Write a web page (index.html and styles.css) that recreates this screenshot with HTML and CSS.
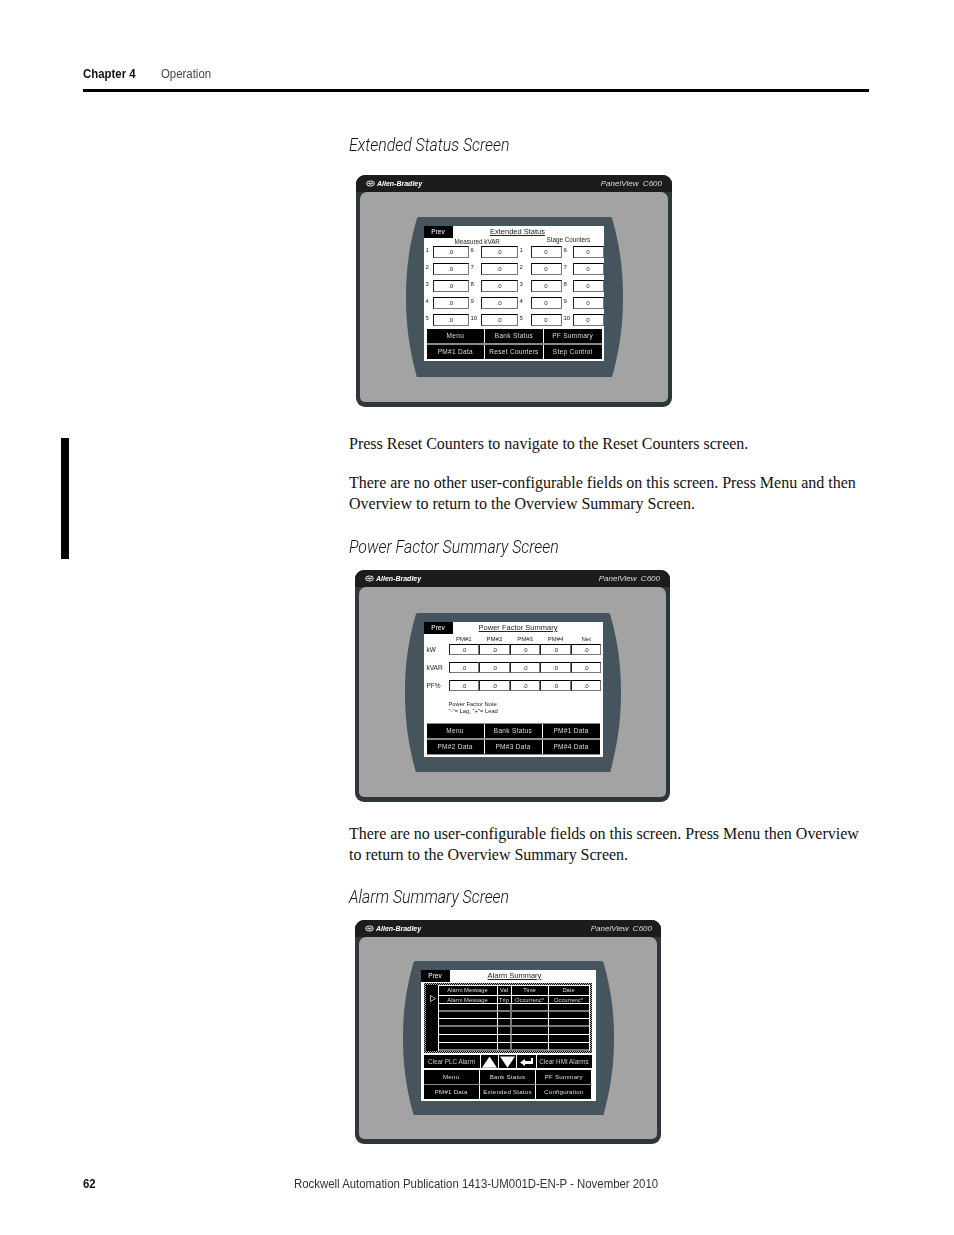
FILE: index.html
```html
<!DOCTYPE html>
<html lang="en">
<head>
<meta charset="utf-8">
<title>Chapter 4 Operation</title>
<link rel="stylesheet" href="styles.css">
</head>
<body>
<div class="page">
	<div class="top">
		<b class="narrow">Chapter 4</b><span class="narrow">Operation</span>
	</div>
	<div class="columns">
		<div class="side"><div class="marker"></div></div>
		<div class="main">
			<h2 class="first">Extended Status Screen</h2>

			<!-- extended status -->
			<div class="device d1">
				<div class="devHead">
					<span class="brand"><svg viewBox="0 0 12 8" width="9" height="7"><ellipse cx="6" cy="4" rx="5.2" ry="3.4" fill="none" stroke="#fff" stroke-width="1.2"/><path d="M2 4h8M4 2l2 4 2-4" fill="none" stroke="#fff" stroke-width=".8"/></svg>Allen-Bradley</span>
					<span class="model">PanelView&nbsp; C600</span>
				</div>
				<div class="devBody">
					<div class="bezel">
						<svg class="bezelShape" viewBox="0 0 100 100" preserveAspectRatio="none"><path d="M5 1Q5.200 0 6 0L94 0Q94.800 0 95 1C99 20 100 35 100 50C100 65 99 80 95 100L5 100C1 80 0 65 0 50C0 35 1 20 5 1Z"/></svg>
						<div class="screen">
							<div class="titleRow">
								<div class="prev">Prev</div>
								<div class="title"><u>Extended Status</u></div>
							</div>
							<div class="subRow"><span class="subA">Measured kVAR</span><span class="subB">Stage Counters</span></div>
							<div class="fields">
								<span>1</span><i>.0</i><span>6</span><i>.0</i><span>1</span><i>0</i><span>6</span><i>0</i>
								<span>2</span><i>.0</i><span>7</span><i>.0</i><span>2</span><i>0</i><span>7</span><i>0</i>
								<span>3</span><i>.0</i><span>8</span><i>.0</i><span>3</span><i>0</i><span>8</span><i>0</i>
								<span>4</span><i>.0</i><span>9</span><i>.0</i><span>4</span><i>0</i><span>9</span><i>0</i>
								<span>5</span><i>.0</i><span>10</span><i>.0</i><span>5</span><i>0</i><span>10</span><i>0</i>
							</div>
							<div class="btns">
								<div>Menu</div><div>Bank Status</div><div>PF Summary</div>
								<div>PM#1 Data</div><div>Reset Counters</div><div>Step Control</div>
							</div>
						</div>
					</div>
				</div>
			</div>

			<p class="p1">Press Reset Counters to navigate to the Reset Counters screen.</p>
			<p class="p2">There are no other user-configurable fields on this screen. Press Menu and then Overview to return to the Overview Summary Screen.</p>

			<h2 class="second">Power Factor Summary Screen</h2>

			<!-- power factor -->
			<div class="device d2">
				<div class="devHead">
					<span class="brand"><svg viewBox="0 0 12 8" width="9" height="7"><ellipse cx="6" cy="4" rx="5.2" ry="3.4" fill="none" stroke="#fff" stroke-width="1.2"/><path d="M2 4h8M4 2l2 4 2-4" fill="none" stroke="#fff" stroke-width=".8"/></svg>Allen-Bradley</span>
					<span class="model">PanelView&nbsp; C600</span>
				</div>
				<div class="devBody">
					<div class="bezel">
						<svg class="bezelShape" viewBox="0 0 100 100" preserveAspectRatio="none"><path d="M5 1Q5.200 0 6 0L94 0Q94.800 0 95 1C99 20 100 35 100 50C100 65 99 80 95 100L5 100C1 80 0 65 0 50C0 35 1 20 5 1Z"/></svg>
						<div class="screen">
							<div class="titleRow">
								<div class="prev">Prev</div>
								<div class="title"><u>Power Factor Summary</u></div>
							</div>
							<div class="pfTable">
								<span></span><b>PM#1</b><b>PM#2</b><b>PM#3</b><b>PM#4</b><b>Net</b>
								<span>kW</span><i>.0</i><i>.0</i><i>.0</i><i>.0</i><i>.0</i>
								<span>kVAR</span><i>.0</i><i>.0</i><i>.0</i><i>.0</i><i>.0</i>
								<span>PF%</span><i>.0</i><i>.0</i><i>.0</i><i>.0</i><i>.0</i>
							</div>
							<div class="pfNote"><b>Power Factor Note:</b><br>"-"= Lag, "+"= Lead</div>
							<div class="btns">
								<div>Menu</div><div>Bank Status</div><div>PM#1 Data</div>
								<div>PM#2 Data</div><div>PM#3 Data</div><div>PM#4 Data</div>
							</div>
						</div>
					</div>
				</div>
			</div>

			<p class="p3">There are no user-configurable fields on this screen. Press Menu then Overview to return to the Overview Summary Screen.</p>

			<h2 class="third">Alarm Summary Screen</h2>

			<!-- alarm summary -->
			<div class="device d3">
				<div class="devHead">
					<span class="brand"><svg viewBox="0 0 12 8" width="9" height="7"><ellipse cx="6" cy="4" rx="5.2" ry="3.4" fill="none" stroke="#fff" stroke-width="1.2"/><path d="M2 4h8M4 2l2 4 2-4" fill="none" stroke="#fff" stroke-width=".8"/></svg>Allen-Bradley</span>
					<span class="model">PanelView&nbsp; C600</span>
				</div>
				<div class="devBody">
					<div class="bezel">
						<svg class="bezelShape" viewBox="0 0 100 100" preserveAspectRatio="none"><path d="M5 1Q5.200 0 6 0L94 0Q94.800 0 95 1C99 20 100 35 100 50C100 65 99 80 95 100L5 100C1 80 0 65 0 50C0 35 1 20 5 1Z"/></svg>
						<div class="screen">
							<div class="titleRow">
								<div class="prev">Prev</div>
								<div class="title"><u>Alarm Summary</u></div>
							</div>
							<div class="alarmBox">
								<div class="cursor"><svg viewBox="0 0 6 7" width="6" height="7"><path d="M.5.5L5.500 3.500L.5 6.500Z" fill="none" stroke="#fff" stroke-width=".7"/></svg></div>
								<div class="alarmTable">
									<div>Alarm Message</div><div>Val</div><div>Time</div><div>Date</div>
									<div>Alarm Message</div><div>Trip</div><div>Occurrenc*</div><div>Occurrenc*</div>
									<div class="g"></div><div class="g"></div><div class="g"></div><div class="g"></div>
									<div></div><div></div><div></div><div></div>
									<div class="g"></div><div class="g"></div><div class="g"></div><div class="g"></div>
									<div></div><div></div><div></div><div></div>
									<div></div><div></div><div></div><div></div>
									<div class="g"></div><div class="g"></div><div class="g"></div><div class="g"></div>
								</div>
							</div>
							<div class="alarmTools">
								<div>Clear PLC Alarm</div>
								<div><svg viewBox="0 0 16 12" width="15" height="12"><path d="M8 0L16 12H0Z" fill="#fff"/></svg></div>
								<div><svg viewBox="0 0 16 12" width="15" height="12"><path d="M0 0H16L8 12Z" fill="#fff"/></svg></div>
								<div><svg viewBox="0 0 13 8" width="13" height="8"><path d="M0 4.500L5 1V3H11V0H13V6H5V8Z" fill="#fff"/></svg></div>
								<div>Clear HMI Alarms</div>
							</div>
							<div class="btns">
								<div>Menu</div><div>Bank Status</div><div>PF Summary</div>
								<div>PM#1 Data</div><div>Extended Status</div><div>Configuration</div>
							</div>
						</div>
					</div>
				</div>
			</div>
		</div>
	</div>
	<div class="foot">
		<b class="narrow">62</b><span class="narrow">Rockwell Automation Publication 1413-UM001D-EN-P - November 2010</span>
	</div>
</div>
</body>
</html>
```
FILE: styles.css
```css
*{
	box-sizing:border-box;
}
html,body{
	margin:0;
	padding:0;
	background:#fff;
}
.page{
	width:954px;
	height:1235px;
	overflow:hidden;
	padding-top:66px;
	font-family:"Liberation Sans",sans-serif;
	color:#1a1a1a;
}
.narrow{
	display:inline-block;
	white-space:nowrap;
	transform:scaleX(.95);
	transform-origin:0 50%;
}
.top{
	margin:0 85px 0 83px;
	height:26px;
	border-bottom:3px solid #000;
	font-size:12px;
	line-height:16px;
	color:#444;
}
.top b{
	width:78px;
	color:#111;
}
.columns{
	display:flex;
}
.side{
	width:349px;
	padding:346px 0 0 61px;
}
.marker{
	width:8px;
	height:121px;
	background:#000;
}
.main{
	width:520px;
}
h2{
	margin:0;
	font-family:Roboto,"Liberation Sans",sans-serif;
	font-size:19px;
	line-height:24px;
	font-weight:300;
	font-style:italic;
	white-space:nowrap;
	color:#111;
	transform:scaleX(.835);
	transform-origin:0 50%;
}
h2.first{
	margin-top:41px;
}
h2.second{
	margin-top:21px;
}
h2.third{
	margin-top:20px;
}
p{
	margin:0;
	font-family:"Liberation Serif",serif;
	font-size:16px;
	line-height:21px;
	letter-spacing:-.01px;
	color:#111;
}
.p1{
	margin-top:26px;
}
.p2{
	margin-top:18px;
}
.p3{
	margin-top:21px;
}

/* device picture */
.device{
	display:flex;
	flex-direction:column;
	background:#2c363b;
	border-radius:9px;
	padding:0 4px 5px;
	filter:blur(.25px);
}
.d1{
	width:316px;
	height:232px;
	margin:18px 0 0 7px;
}
.d2{
	width:315px;
	height:232px;
	margin:11px 0 0 6px;
}
.d3{
	width:306px;
	height:224px;
	margin:11px 0 0 6px;
}
.devHead{
	display:flex;
	justify-content:space-between;
	align-items:center;
	height:17px;
	flex:none;
	margin:0 -4px;
	padding:0 10px 0 10px;
	background:#1c1c1c;
	border-radius:9px 9px 0 0;
	color:#fff;
}
.d3 .devHead{
	padding-right:9px;
}
.brand{
	display:flex;
	align-items:center;
	gap:2px;
	font-size:7px;
	font-weight:bold;
	font-style:italic;
}
.model{
	font-size:8px;
	font-style:italic;
	color:#ddd;
}
.devBody{
	flex:1;
	display:flex;
	align-items:center;
	justify-content:center;
	background:#a3a3a3;
	border-radius:7px 7px 5px 5px;
}
.bezel{
	position:relative;
	padding:9px 19px 16px 18px;
}
.d2 .bezel{
	padding:9px 18px 15px 19px;
}
.d3 .bezel{
	padding:9px 18px 14px 18px;
}
.bezelShape{
	position:absolute;
	left:0;
	top:0;
	width:100%;
	height:100%;
	fill:#46545e;
}

/* panel screen */
.screen{
	position:relative;
	display:flex;
	flex-direction:column;
	width:180px;
	height:135px;
	background:#fff;
	font-size:6px;
	color:#222;
}
.d2 .screen{
	width:179px;
}
.d3 .screen{
	width:175px;
	height:131px;
}
.titleRow{
	display:flex;
	height:12px;
	flex:none;
}
.prev{
	width:29px;
	background:#000;
	color:#fff;
	text-align:center;
	font-size:6.5px;
	line-height:12px;
}
.title{
	flex:1;
	padding-right:21px;
	text-align:center;
	font-size:7.500px;
	line-height:12px;
}
.d2 .title{
	padding-right:19px;
}
.d3 .title{
	padding-right:16px;
}
.subRow{
	display:flex;
	height:8px;
	flex:none;
	font-size:6.300px;
	line-height:7px;
}
.subA{
	margin-left:31px;
	width:92px;
}
.subB{
	margin-top:-2px;
}
.fields{
	display:grid;
	grid-template-columns:9px 36px 12px 37px 13px 31px 11px 31px;
	grid-auto-rows:12px;
	row-gap:5px;
}
.fields span{
	padding-left:2px;
	line-height:9px;
}
.fields i,.pfTable i{
	font-style:normal;
	text-align:center;
	border:1px solid #777;
	border-top-color:#000;
	border-left-color:#222;
	line-height:10px;
}
.btns{
	display:grid;
	grid-template-columns:repeat(3,1fr);
	grid-auto-rows:14px;
	column-gap:1px;
	row-gap:2px;
	width:175px;
	margin:auto 0 2px 3px;
	background:linear-gradient(#8a8a8a,#8a8a8a) 0 14px/100% 2px no-repeat;
	color:#ddd;
	font-size:6.500px;
	letter-spacing:.3px;
}
.btns div{
	background:#000;
	text-align:center;
	line-height:14px;
	white-space:nowrap;
}
.pfTable{
	display:grid;
	grid-template-columns:25px repeat(5,30.6px);
	grid-template-rows:3px 11px 11px 11px;
	row-gap:7px;
	font-size:6px;
}
.pfTable b{
	font-weight:normal;
	text-align:center;
	line-height:10px;
}
.pfTable span{
	padding-left:3px;
	line-height:11px;
	font-size:6.500px;
}
.pfNote{
	margin:10px 0 0 25px;
	font-size:5.800px;
	line-height:7px;
}
.pfNote b{
	font-weight:normal;
}
.d2 .btns{
	width:173px;
	margin:auto 0 3px 3px;
	box-shadow:0 -1px #8a8a8a,0 1px #8a8a8a;
}

/* alarm list */
.alarmBox{
	display:flex;
	flex:none;
	width:168px;
	height:70px;
	margin:1px 0 2px 3px;
	padding:2px;
	background:repeating-conic-gradient(#000 0 25%,#aaa 0 50%) 0 0/2px 2px;
}
.cursor{
	width:12px;
	padding:10px 0 0 4px;
	flex:none;
	background:#000;
}
.alarmTable{
	display:grid;
	grid-template-columns:59px 14px 37px 40px;
	grid-template-rows:10px repeat(7,7.8px);
	height:66px;
	background:#000;
	border:1px solid #fff;
	color:#ddd;
	font-size:5.800px;
	text-align:center;
}
.alarmTable div{
	border-right:1px solid #fff;
	border-bottom:1px solid #fff;
	line-height:8px;
	white-space:nowrap;
	overflow:hidden;
}
.alarmTable div:nth-child(4n+2){
	border-right-color:#777;
	border-right-width:2px;
}
.alarmTable div:nth-child(-n+8):nth-child(4n+2){
	border-right-color:#fff;
	border-right-width:1px;
}
.alarmTable div:nth-child(4n){
	border-right:0;
}
.alarmTable .g{
	border-bottom:2px solid #777;
}
.alarmTools{
	display:grid;
	grid-template-columns:56px 17px 17px 19px 1fr;
	grid-auto-rows:13px;
	column-gap:1px;
	flex:none;
	width:168px;
	margin-left:3px;
	color:#ccc;
	font-size:6.300px;
}
.alarmTools div{
	display:flex;
	align-items:center;
	justify-content:center;
	background:#000;
	white-space:nowrap;
}
.d3 .btns{
	width:168px;
	margin:2px 0 0 3px;
	background:linear-gradient(#8a8a8a,#8a8a8a) 0 14px/100% 1px no-repeat;
	row-gap:1px;
	font-size:6.200px;
	letter-spacing:.2px;
}

.foot{
	display:flex;
	margin:0 0 0 83px;
	padding-top:32px;
	font-size:12px;
	line-height:16px;
}
.foot b{
	width:211px;
	color:#111;
}
.foot span{
	color:#333;
}
```
